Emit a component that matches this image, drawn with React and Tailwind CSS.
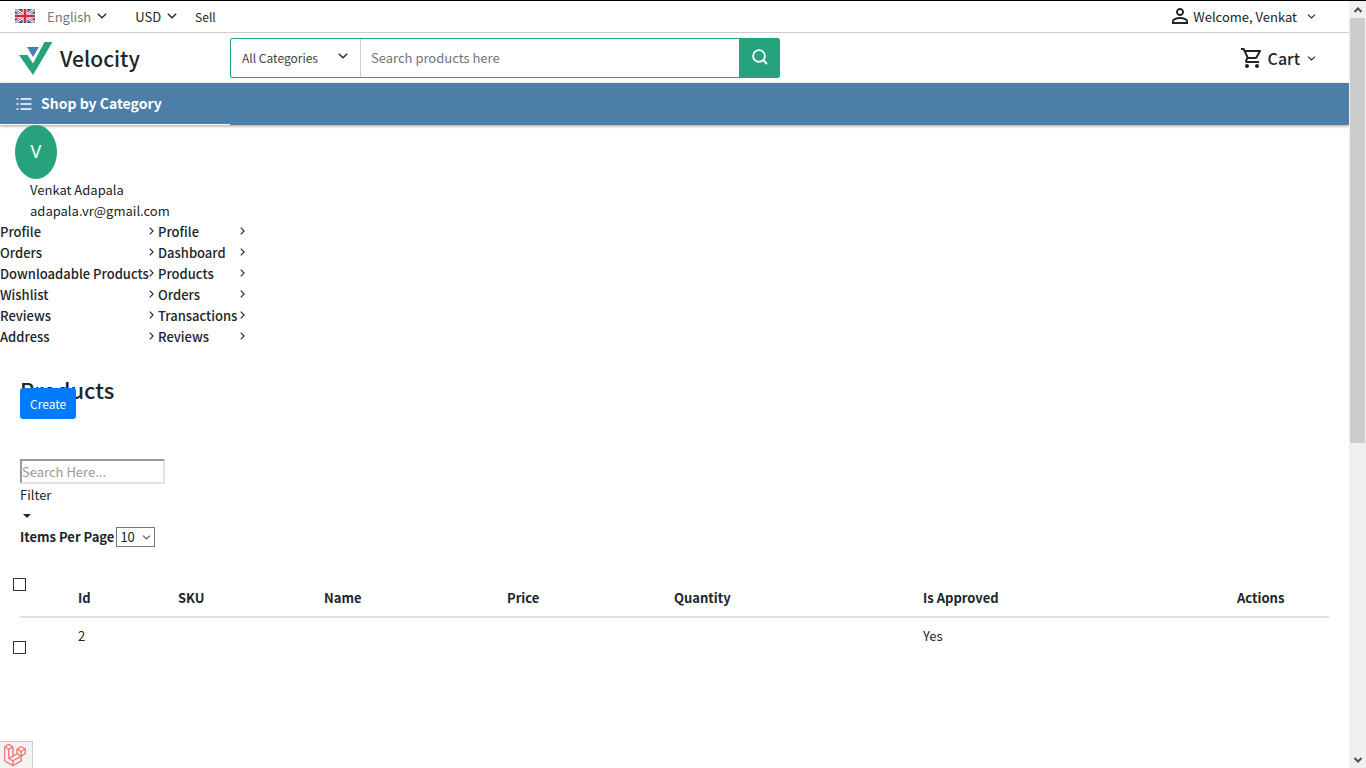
import React from "react";
import { MdPersonOutline, MdOutlineShoppingCart } from "react-icons/md";
import { SiLaravel } from "react-icons/si";

const Chevron = ({ className }) => (
  <svg viewBox="0 0 10 6" className={className} fill="none" stroke="currentColor" strokeWidth="1.3" aria-hidden="true">
    <path d="M0.8 0.8 L5 4.8 L9.2 0.8" />
  </svg>
);

const Flag = () => (
  <svg viewBox="0 0 20 14" className="h-[14px] w-5" aria-hidden="true">
    <rect width="20" height="14" fill="#3c5a9e" />
    <path d="M0 0L20 14M20 0L0 14" stroke="#f3f3f6" strokeWidth="3" />
    <path d="M0 0L20 14M20 0L0 14" stroke="#d8475a" strokeWidth="1" />
    <path d="M10 0V14M0 7H20" stroke="#f6f6f8" strokeWidth="4.6" />
    <path d="M10 0V14M0 7H20" stroke="#d5283d" strokeWidth="2.6" />
  </svg>
);

const Logo = () => (
  <svg viewBox="0 0 34 33" className="h-[33px] w-[34px]" aria-hidden="true">
    <path d="M0 13H8.5L14 21.5L25.5 0H33.5L14 33Z" fill="#26a37c" />
    <path d="M8 5H20L14 15Z" fill="#4d7ea8" />
  </svg>
);

const customerLinks = ["Profile", "Orders", "Downloadable Products", "Wishlist", "Reviews", "Address"];
const sellerLinks = ["Profile", "Dashboard", "Products", "Orders", "Transactions", "Reviews"];

function LinkList({ items, className }) {
  return (
    <ul className={className}>
      {items.map((item) => (
        <li key={item}>
          <a href="#" className="flex items-center justify-between font-medium">
            {item}
            <svg viewBox="0 0 6 10" className="mb-[2px] h-2 w-[5px]" fill="none" stroke="currentColor" strokeWidth="1.4" aria-hidden="true">
              <path d="M0.8 0.8L5 5L0.8 9.2" />
            </svg>
          </a>
        </li>
      ))}
    </ul>
  );
}

const Check = ({ label }) => (
  <input
    type="checkbox"
    aria-label={label}
    className="-ml-[7px] block size-[13px] appearance-none border border-[#333] bg-white checked:bg-[#333]"
  />
);

function ScrollBar() {
  return (
    <div className="sticky top-0 flex h-[calc(100vh-1px)] w-[17px] shrink-0 flex-col bg-[#f0f0f0] text-[#505050]" aria-hidden="true">
      <div className="flex h-[17px] items-center justify-center">
        <svg viewBox="0 0 8 6" className="h-[6px] w-2" fill="none" stroke="currentColor" strokeWidth="2"><path d="M0.5 5L4 1.5L7.5 5" /></svg>
      </div>
      <div className="flex-1">
        <div className="mr-px ml-px h-[58%] bg-[#cdcdcd]" />
      </div>
      <div className="flex h-[17px] items-center justify-center">
        <svg viewBox="0 0 8 6" className="h-[6px] w-2" fill="none" stroke="currentColor" strokeWidth="2"><path d="M0.5 1L4 4.5L7.5 1" /></svg>
      </div>
    </div>
  );
}

export default function App() {
  return (
    <div className="flex min-h-screen border-t border-black bg-white font-['Noto_Sans_CJK_JP','Noto_Sans',sans-serif] text-[13px] leading-[21px] text-[#212529]">
      <div className="min-w-0 flex-1">
        <header>
          <div className="flex h-8 items-center justify-between border-b border-[#ccc] pr-8 pb-px pl-[15px]">
            <div className="flex items-center">
              <button className="flex items-center text-[#777]">
                <Flag />
                <span className="ml-3">English</span>
                <Chevron className="ml-[6px] h-[6px] w-[10px] text-[#222]" />
              </button>
              <button className="ml-7 flex items-center">
                USD
                <Chevron className="ml-[6px] h-[6px] w-[10px]" />
              </button>
              <a href="#" className="ml-[18px] text-[12px]">Sell</a>
            </div>
            <button className="flex items-center">
              <MdPersonOutline className="size-6" />
              <span className="ml-px">Welcome, Venkat</span>
              <Chevron className="mr-px ml-[10px] h-[5px] w-[9px]" />
            </button>
          </div>

          <div className="flex h-[50px] items-center pr-8 pl-[19px]">
            <a href="#" className="flex w-[211px] shrink-0 items-center gap-[7px] text-[21px] font-medium">
              <Logo />
              Velocity
            </a>
            <form className="flex h-10 w-[550px] rounded-xs border border-[#26a37c]">
              <div className="relative w-[130px] border-r border-[#ccc]">
                <select aria-label="Category" className="h-full w-full appearance-none bg-transparent pb-px pl-[11px] text-[12px] text-[#444]">
                  <option>All Categories</option>
                </select>
                <Chevron className="pointer-events-none absolute top-[14px] right-3 h-[6px] w-[10px] text-[#222]" />
              </div>
              <input
                type="search"
                aria-label="Search products"
                placeholder="Search products here"
                className="min-w-0 flex-1 px-[10px] pb-[2px] text-[13px] placeholder:text-[#6c757d]"
              />
              <button type="button" aria-label="Search" className="flex w-10 items-center justify-center bg-[#26a37c] pb-[2px] pl-[2px] text-white">
                <svg viewBox="0 0 16 16" className="size-4" fill="none" stroke="currentColor" strokeWidth="1.8" aria-hidden="true">
                  <circle cx="7" cy="7" r="5.9" />
                  <path d="M11 11L15 15" />
                </svg>
              </button>
            </form>
            <button className="ml-auto flex items-center text-[16px] font-medium">
              <MdOutlineShoppingCart className="size-6" />
              <span className="ml-1">Cart</span>
              <Chevron className="mr-px ml-[7px] h-[5px] w-[9px]" />
            </button>
          </div>

          <div className="h-[42px] bg-[#4d7ea8] shadow-[0_1px_3px_rgba(0,0,0,0.4)]">
            <a href="#" className="flex h-full w-[230px] items-center gap-[9px] border-b border-white pl-4 text-[14px] font-bold text-white">
              <svg viewBox="0 0 16 14" className="h-[14px] w-4" stroke="currentColor" strokeWidth="1.3" aria-hidden="true">
                <path d="M0.5 2H2.5M4.5 2H15.5M0.5 7H2.5M4.5 7H15.5M0.5 12H2.5M4.5 12H15.5" />
              </svg>
              Shop by Category
            </a>
          </div>
        </header>

        <aside>
          <div className="relative ml-[15px] flex h-[54px] w-[42px] items-center justify-center rounded-[50%] bg-[#26a37c] pb-[2px] font-['Noto_Sans',sans-serif] text-[18px] text-white">V</div>
          <div className="pl-[30px]">
            <p>Venkat Adapala</p>
            <p>adapala.vr@gmail.com</p>
          </div>
          <nav className="flex">
            <LinkList items={customerLinks} className="w-[158px] pr-1" />
            <LinkList items={sellerLinks} className="w-[87px]" />
          </nav>
        </aside>

        <main className="px-5 pt-[26px]">
          <h1 className="text-[22px] leading-8 font-medium">Products</h1>
          <button className="relative -mt-[17px] block h-[31px] rounded-[3px] bg-[#007bff] px-[10px] text-[12px] text-white">Create</button>

          <div className="mt-10">
            <input
              type="text"
              aria-label="Search"
              placeholder="Search Here..."
              className="block h-[25px] w-[145px] border-2 border-t-[#999] border-r-[#e3e3e3] border-b-[#e3e3e3] border-l-[#999] placeholder:text-[#999]"
            />
            <button className="block text-left">
              <span className="block">Filter</span>
              <span className="flex h-[21px] items-center pl-[3px]">
                <svg viewBox="0 0 8 4" className="h-1 w-2" fill="currentColor" aria-hidden="true"><path d="M0 0H8L4 4Z" /></svg>
              </span>
            </button>
            <div className="flex items-center">
              <label htmlFor="per-page" className="font-bold">Items Per Page</label>
              <div className="relative ml-[2px]">
                <select id="per-page" className="block h-5 w-[39px] appearance-none border border-[#767676] bg-white pl-[3px] leading-[18px]">
                  <option>10</option>
                </select>
                <Chevron className="pointer-events-none absolute top-2 right-1 h-[5px] w-[9px] text-[#555]" />
              </div>
            </div>
          </div>

          <table className="mt-[27px] w-full table-fixed text-left">
            <thead>
              <tr className="border-b-2 border-[#dee2e6] align-top">
                <th className="w-[46px] pt-1"><Check label="Select all" /></th>
                <th className="w-[100px] px-3 pt-[13px] pb-2">Id</th>
                <th className="w-[146px] px-3 pt-[13px] pb-2">SKU</th>
                <th className="w-[183px] px-3 pt-[13px] pb-2">Name</th>
                <th className="w-[167px] px-3 pt-[13px] pb-2">Price</th>
                <th className="w-[249px] px-3 pt-[13px] pb-2">Quantity</th>
                <th className="w-[314px] px-3 pt-[13px] pb-2">Is Approved</th>
                <th className="w-[104px] px-3 pt-[13px] pb-2">Actions</th>
              </tr>
            </thead>
            <tbody>
              <tr className="align-top">
                <td className="pt-[23px]"><Check label="Select product 2" /></td>
                <td className="px-3 pt-[7px]">2</td>
                <td /><td /><td /><td />
                <td className="px-3 pt-[7px]">Yes</td>
                <td />
              </tr>
            </tbody>
          </table>
        </main>
      </div>

      <ScrollBar />

      <button aria-label="Open debug bar" className="fixed bottom-0 left-0 flex h-[27px] w-[33px] items-center border-t border-r border-[#ccc] bg-[#f3f3f3] pl-1 text-[#f4645f]">
        <SiLaravel className="size-[22px]" stroke="currentColor" strokeWidth="0.5" />
      </button>
    </div>
  );
}
